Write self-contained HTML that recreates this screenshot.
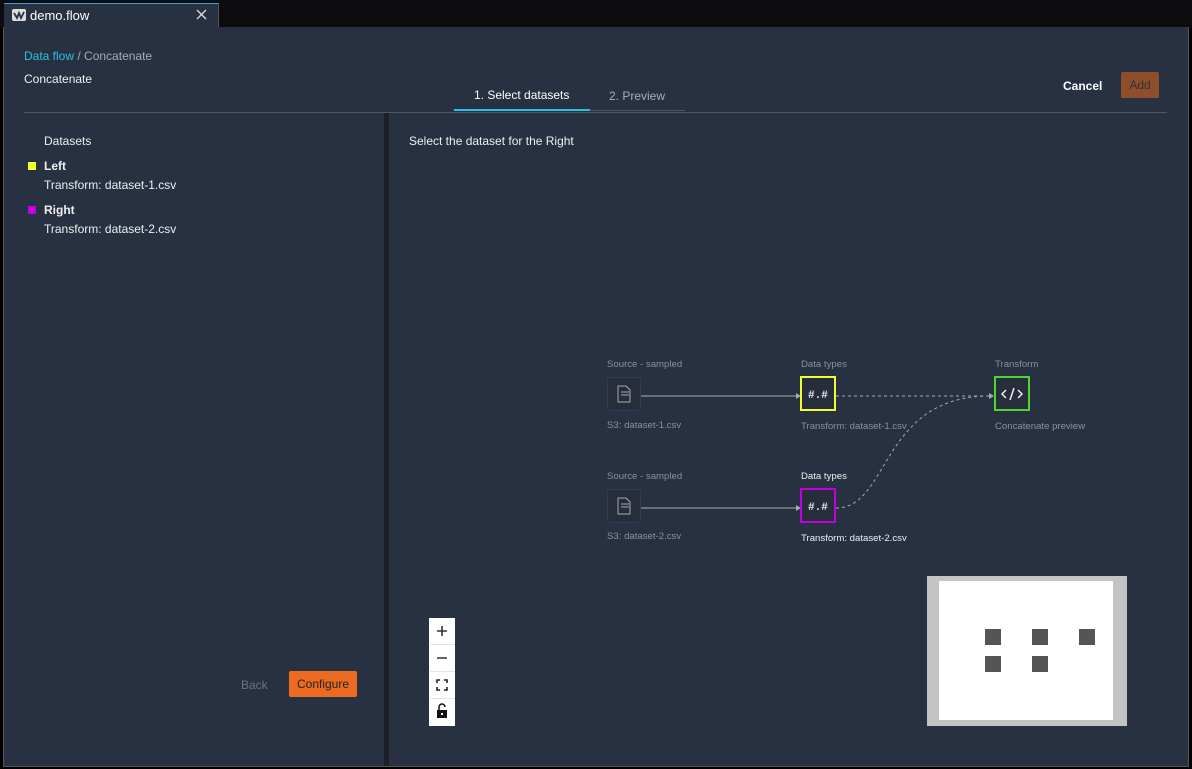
<!DOCTYPE html>
<html><head><style>
body{margin:0;width:1192px;height:769px;background:#000;font-family:"Liberation Sans",sans-serif;position:relative;overflow:hidden;color:#d5dbdb}
.a{position:absolute}
.t{font-size:12px}
</style></head><body>
<div class="a" style="left:0;top:0;width:1192px;height:28px;background:#0c0c0e"></div>
<div class="a" style="left:4px;top:3px;width:214px;height:25px;background:#283142;border-top:1px solid #2aa3d8;border-right:1px solid #555"></div>
<svg class="a" style="left:12px;top:9px" width="14" height="12"><rect width="14" height="12" rx="2" fill="#ddd"/><path d="M2 4 L5 9 L7 4 L9 9 L12 3" stroke="#283142" stroke-width="1.8" fill="none"/></svg>
<div class="a" style="left:30px;top:8px;font-size:13px;color:#fff">demo.flow</div>
<svg class="a" style="left:196px;top:9px" width="11" height="11"><path d="M1 1L10 10M10 1L1 10" stroke="#ddd" stroke-width="1.3"/></svg>
<div class="a" style="left:3px;top:27px;width:1184px;height:739px;background:#283142;border:1px solid #555;border-top:none"></div>
<div class="a t" style="left:24px;top:49px"><span style="color:#2bc0e4">Data flow</span> <span style="color:#aab">/ Concatenate</span></div>
<div class="a t" style="left:24px;top:72px;color:#eee">Concatenate</div>
<div class="a t" style="left:474px;top:88px;color:#fff">1. Select datasets</div>
<div class="a t" style="left:609px;top:89px;color:#aab">2. Preview</div>
<div class="a" style="left:454px;top:109px;width:136px;height:2px;background:#2bc0e4"></div>
<div class="a" style="left:590px;top:110px;width:95px;height:1px;background:#555"></div>
<div class="a t" style="left:1063px;top:79px;color:#fff;font-weight:bold">Cancel</div>
<div class="a t" style="left:1121px;top:72px;width:38px;height:26px;background:#8e4d2b;border-radius:2px;color:#333;text-align:center;line-height:26px">Add</div>
<div class="a" style="left:24px;top:112px;width:1143px;height:1px;background:#555"></div>
<div class="a" style="left:384px;top:113px;width:5px;height:653px;background:#1b1f27"></div>
<div class="a t" style="left:44px;top:134px;color:#eee">Datasets</div>
<div class="a" style="left:28px;top:162px;width:8px;height:8px;background:#f0ff2c"></div>
<div class="a t" style="left:44px;top:159px;color:#eee;font-weight:bold">Left</div>
<div class="a t" style="left:44px;top:178px;color:#eee">Transform: dataset-1.csv</div>
<div class="a" style="left:28px;top:206px;width:8px;height:8px;background:#c000e0"></div>
<div class="a t" style="left:44px;top:203px;color:#eee;font-weight:bold">Right</div>
<div class="a t" style="left:44px;top:222px;color:#eee">Transform: dataset-2.csv</div>
<div class="a t" style="left:241px;top:678px;color:#6b7381">Back</div>
<div class="a t" style="left:289px;top:671px;width:68px;height:26px;background:#ec6b21;border-radius:2px;color:#222;text-align:center;line-height:26px">Configure</div>
<div class="a t" style="left:409px;top:134px;color:#eee">Select the dataset for the Right</div>
<svg class="a" style="left:590px;top:350px" width="520" height="210" font-family="Liberation Sans" font-size="9.6">
<g fill="#8a919c"><text x="17" y="17">Source - sampled</text><text x="211" y="17">Data types</text><text x="405" y="17">Transform</text>
<text x="17" y="78">S3: dataset-1.csv</text><text x="211" y="79">Transform: dataset-1.csv</text><text x="405" y="79">Concatenate preview</text>
<text x="17" y="129">Source - sampled</text><text x="17" y="189">S3: dataset-2.csv</text></g>
<g fill="#eee"><text x="211" y="129">Data types</text><text x="211" y="191">Transform: dataset-2.csv</text></g>
<rect x="17.5" y="27.5" width="33" height="33" rx="2" fill="#262e3b" stroke="#333c4a"/>
<rect x="17.5" y="139.5" width="33" height="33" rx="2" fill="#262e3b" stroke="#333c4a"/>
<g stroke="#aaa" fill="none"><path d="M28 36h8l4 4v12h-12z M31 42h8 M31 45h8"/><path d="M28 148h8l4 4v12h-12z M31 154h8 M31 157h8"/></g>
<path d="M51 46H206 M51 158H206" stroke="#aaa"/>
<path d="M206 43l5 3l-5 3z M206 155l5 3l-5 3z M399 43l5 3l-5 3z" fill="#aaa"/>
<path d="M246 46H400 M246 158C300 158 290 46 400 46" stroke="#aaa" stroke-dasharray="3 3" fill="none"/>
<rect x="211" y="27" width="34" height="33" fill="#262e3b" stroke="#f0ff2c" stroke-width="2"/>
<rect x="211" y="139" width="34" height="33" fill="#262e3b" stroke="#c000e0" stroke-width="2"/>
<rect x="405" y="27" width="34" height="33" fill="#262e3b" stroke="#4fd52c" stroke-width="2"/>
<g fill="#eee" font-family="Liberation Mono" font-size="11" font-weight="bold"><text x="218" y="48">#.#</text><text x="218" y="160">#.#</text></g>
<path d="M416 40l-4 4l4 4 M428 40l4 4l-4 4 M424 38l-4 12" stroke="#eee" stroke-width="1.5" fill="none"/>
</svg>
<div class="a" style="left:429px;top:618px;width:26px;height:108px;background:#fff"></div>
<svg class="a" style="left:429px;top:618px" width="26" height="108">
<path d="M8 13h10M13 8v10M8 40h10" stroke="#333" stroke-width="1.6"/>
<path d="M1 26.5h25M1 53.5h25M1 80.5h25" stroke="#e4e4e4"/>
<path d="M8 65v-3h3M15 62h3v3M18 69v3h-3M11 72h-3v-3" stroke="#222" stroke-width="1.6" fill="none"/>
<path d="M10 92v-3a3 3 0 0 1 6 0" stroke="#111" stroke-width="1.5" fill="none"/>
<rect x="8" y="92" width="10" height="8" fill="#111"/><rect x="12" y="95" width="2" height="2" fill="#fff"/>
</svg>
<div class="a" style="left:927px;top:576px;width:200px;height:150px;background:#c4c4c4"></div>
<div class="a" style="left:939px;top:581px;width:174px;height:139px;background:#fff"></div>
<div class="a" style="left:985px;top:629px;width:16px;height:16px;background:#555"></div>
<div class="a" style="left:1032px;top:629px;width:16px;height:16px;background:#555"></div>
<div class="a" style="left:1079px;top:629px;width:16px;height:16px;background:#555"></div>
<div class="a" style="left:985px;top:656px;width:16px;height:16px;background:#555"></div>
<div class="a" style="left:1032px;top:656px;width:16px;height:16px;background:#555"></div>
</body></html>
